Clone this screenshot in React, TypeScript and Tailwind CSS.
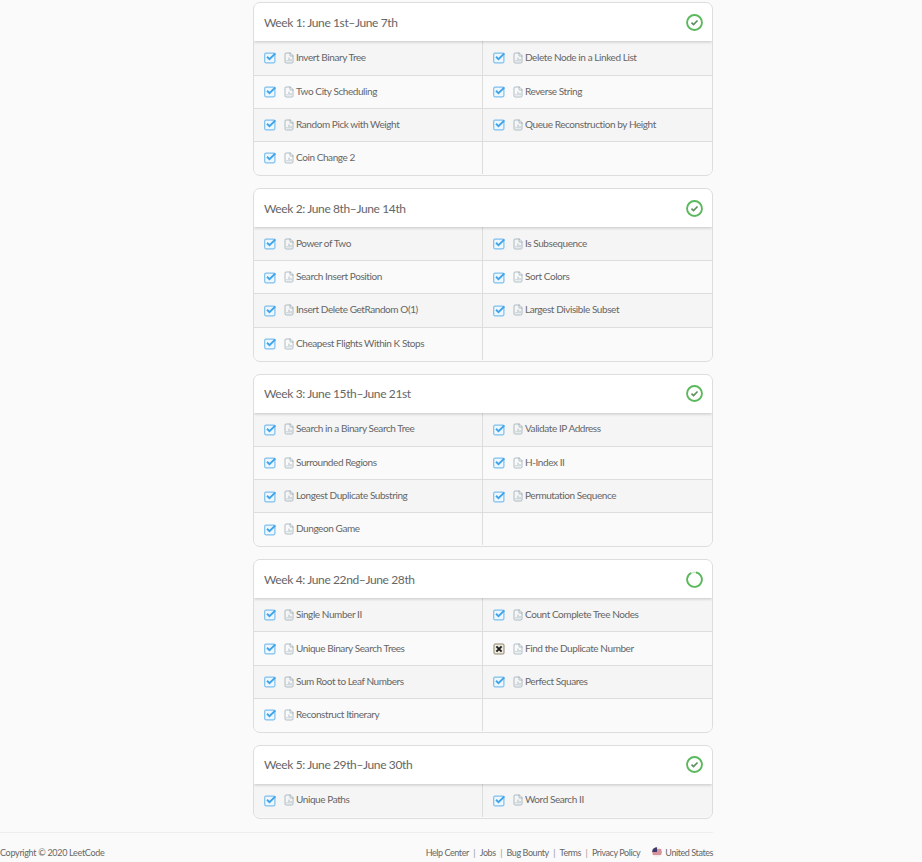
import { FileChartColumn } from "lucide-react";

type Problem = { name: string; failed?: boolean };
type Week = { title: string; spinner?: boolean; problems: Problem[] };

const weeks: Week[] = [
  {
    title: "Week 1: June 1st–June 7th",
    problems: [
      { name: "Invert Binary Tree" },
      { name: "Delete Node in a Linked List" },
      { name: "Two City Scheduling" },
      { name: "Reverse String" },
      { name: "Random Pick with Weight" },
      { name: "Queue Reconstruction by Height" },
      { name: "Coin Change 2" },
    ],
  },
  {
    title: "Week 2: June 8th–June 14th",
    problems: [
      { name: "Power of Two" },
      { name: "Is Subsequence" },
      { name: "Search Insert Position" },
      { name: "Sort Colors" },
      { name: "Insert Delete GetRandom O(1)" },
      { name: "Largest Divisible Subset" },
      { name: "Cheapest Flights Within K Stops" },
    ],
  },
  {
    title: "Week 3: June 15th–June 21st",
    problems: [
      { name: "Search in a Binary Search Tree" },
      { name: "Validate IP Address" },
      { name: "Surrounded Regions" },
      { name: "H-Index II" },
      { name: "Longest Duplicate Substring" },
      { name: "Permutation Sequence" },
      { name: "Dungeon Game" },
    ],
  },
  {
    title: "Week 4: June 22nd–June 28th",
    spinner: true,
    problems: [
      { name: "Single Number II" },
      { name: "Count Complete Tree Nodes" },
      { name: "Unique Binary Search Trees" },
      { name: "Find the Duplicate Number", failed: true },
      { name: "Sum Root to Leaf Numbers" },
      { name: "Perfect Squares" },
      { name: "Reconstruct Itinerary" },
    ],
  },
  {
    title: "Week 5: June 29th–June 30th",
    problems: [{ name: "Unique Paths" }, { name: "Word Search II" }],
  },
];

const footerLinks = ["Help Center", "Jobs", "Bug Bounty", "Terms", "Privacy Policy"];

function CheckedBox() {
  return (
    <svg width="13" height="13" viewBox="0 0 13 13" className="shrink-0">
      <rect x="0.7" y="2.2" width="10.2" height="9.6" rx="1.2" fill="#eef7fd" stroke="#7cc0ee" strokeWidth="1.2" />
      <path d="M3 5.8 L5.5 8.2 L11.4 2.4" fill="none" stroke="#3fa4e8" strokeWidth="1.9" />
    </svg>
  );
}

function FailedBox() {
  return (
    <svg width="13" height="13" viewBox="0 0 13 13" className="shrink-0">
      <rect x="1" y="2" width="10" height="10" rx="1" fill="#f1ece0" stroke="#8d8570" strokeWidth="1" />
      <path d="M3.4 4.4 L8.6 9.6 M8.6 4.4 L3.4 9.6" fill="none" stroke="#1f1f1f" strokeWidth="2" />
    </svg>
  );
}

function StatusCircle({ spinner }: { spinner?: boolean }) {
  if (spinner) {
    return (
      <svg width="17" height="17" viewBox="0 0 18 18">
        <circle cx="9" cy="9" r="7.8" fill="none" stroke="#cfe8cf" strokeWidth="1.6" />
        <path d="M10.6 1.4 A7.8 7.8 0 1 1 5.4 2.1" fill="none" stroke="#5cb85c" strokeWidth="2" />
      </svg>
    );
  }
  return (
    <svg width="17" height="17" viewBox="0 0 18 18">
      <circle cx="9" cy="9" r="7.9" fill="none" stroke="#5cb85c" strokeWidth="2" />
      <path d="M5.8 9.2 L8 11.3 L12.2 6.9" fill="none" stroke="#5b8f5b" strokeWidth="1.7" />
    </svg>
  );
}

function UsFlag() {
  return (
    <svg width="10" height="10" viewBox="0 0 10 10" className="shrink-0">
      <circle cx="5" cy="5" r="4.8" fill="#f3e6e8" />
      <path d="M0.6 3 H9.4 M0.2 5 H9.8 M0.6 7 H9.4" stroke="#b8414f" strokeWidth="1.1" />
      <path d="M5 0.2 A4.8 4.8 0 0 0 0.2 5 H5 Z" fill="#3c3b6e" />
    </svg>
  );
}

function ProblemCell({ problem, index }: { problem: Problem; index: number }) {
  const left = index % 2 === 0;
  const oddRow = Math.floor(index / 2) % 2 === 0;
  const isFirstRow = index < 2;
  return (
    <div
      className={`flex h-[33.2px] items-center pl-[10px] ${left ? "border-r border-[#ddd]" : ""} ${
        isFirstRow ? "" : "border-t border-[#ddd]"
      } ${oddRow ? "bg-[#f5f5f5]" : "bg-[#fafafa]"}`}
    >
      {problem.name && (
        <>
          {problem.failed ? <FailedBox /> : <CheckedBox />}
          <FileChartColumn size={12} strokeWidth={1.4} className="ml-[6px] shrink-0 text-[#8fa3b0]" />
          <span className="ml-[1px] whitespace-nowrap pb-[1px] text-[10px] tracking-[-0.42px] text-[#666]">
            {problem.name}
          </span>
        </>
      )}
    </div>
  );
}

function WeekCard({ week }: { week: Week }) {
  const cells = week.problems.length % 2 ? [...week.problems, { name: "" }] : week.problems;
  return (
    <section className="mb-[12px] overflow-hidden rounded-[7px] border border-[#ddd] bg-[#fafafa] pb-[1px]">
      <header className="relative z-10 flex h-[37.9px] items-center justify-between bg-white pl-[10px] pr-[9px] shadow-[0_1px_3px_rgba(0,0,0,0.2)]">
        <h3 className="pt-[1px] text-[12px] font-normal tracking-[-0.38px] text-[#666]">{week.title}</h3>
        <StatusCircle spinner={week.spinner} />
      </header>
      <div className="grid grid-cols-[229px_1fr]">
        {cells.map((problem, i) => (
          <ProblemCell key={i} problem={problem} index={i} />
        ))}
      </div>
    </section>
  );
}

export default function App() {
  return (
    <div className="min-h-screen bg-[#fafafa] font-['Lato',sans-serif]">
      <div className="w-[713px] pt-[2.45px]">
        <div className="ml-[253px]">
          {weeks.map((week) => (
            <WeekCard key={week.title} week={week} />
          ))}
        </div>
        <footer className="mt-[13px] flex h-[30px] items-end justify-between border-t border-[#eee] pb-[3px] text-[9px] text-[#666]">
          <span className="tracking-[-0.3px]">Copyright © 2020 LeetCode</span>
          <div className="flex items-center tracking-[-0.42px]">
            {footerLinks.map((link, i) => (
              <span key={link} className="flex items-center">
                {i > 0 && <span className="mx-[4.5px] text-[#999]">|</span>}
                {link}
              </span>
            ))}
            <span className="ml-[12px] flex items-center gap-[3px]">
              <UsFlag />
              United States
            </span>
          </div>
        </footer>
      </div>
    </div>
  );
}
